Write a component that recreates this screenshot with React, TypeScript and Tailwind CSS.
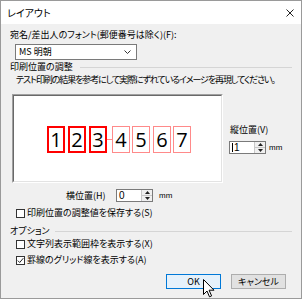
import React from "react";

function Spin({ value, caret }: { value: string; caret?: boolean }) {
  return (
    <div className="w-[37px] h-[13px] bg-white border border-[#7a7a7a] flex items-stretch">
      <div className="flex-1 flex items-center pl-[2px] text-[10px] leading-[10px] font-['Liberation_Sans',sans-serif]">
        {caret && <span className="w-px h-[9px] bg-black mr-[1px]" />}
        {value}
      </div>
      <div className="w-[11px] border-l border-[#c8c8c8] bg-[#f0f0f0] flex flex-col">
        <div className="flex-1 flex items-center justify-center border-b border-[#c8c8c8]">
          <svg width="5" height="3" viewBox="0 0 5 3"><path d="M0 3 L2.5 0 L5 3 Z" fill="#222" /></svg>
        </div>
        <div className="flex-1 flex items-center justify-center">
          <svg width="5" height="3" viewBox="0 0 5 3"><path d="M0 0 L2.5 3 L5 0 Z" fill="#222" /></svg>
        </div>
      </div>
    </div>
  );
}

function Check({ checked }: { checked?: boolean }) {
  return (
    <div className="w-[9px] h-[9px] border border-[#333] bg-white flex items-center justify-center shrink-0">
      {checked && (
        <svg width="7" height="7" viewBox="0 0 7 7">
          <path d="M0.8 3.6 L2.7 5.5 L6.3 1.2" fill="none" stroke="#222" strokeWidth="1" />
        </svg>
      )}
    </div>
  );
}

function Digit({ d, strong }: { d: string; strong?: boolean }) {
  return (
    <div
      className={
        strong
          ? "w-[18px] h-[27px] border-2 border-[#ff0000] flex items-center justify-center text-[20px] leading-[20px] font-['Open_Sans',sans-serif] text-black"
          : "w-[18px] h-[27px] border-[1.5px] border-[#ff8a8a] flex items-center justify-center text-[20px] leading-[20px] font-['Open_Sans',sans-serif] text-black"
      }
    >
      {d}
    </div>
  );
}

export default function App() {
  return (
    <div className="relative w-[302px] h-[299px] border border-[#9a9a9a] bg-[#f0f0f0] flex flex-col overflow-hidden text-[9px] leading-[12px] text-black font-['Noto_Sans_CJK_JP',sans-serif] [font-feature-settings:'palt']">
      <div className="h-[23px] bg-white flex items-center justify-between pl-[6px] pr-[7px] shrink-0">
        <span className="text-[10px]">レイアウト</span>
        <svg width="8" height="8" viewBox="0 0 8 8">
          <path d="M0.5 0.5 L7.5 7.5 M7.5 0.5 L0.5 7.5" stroke="#222" strokeWidth="1" />
        </svg>
      </div>
      <div className="flex flex-col pl-[9px] pr-[9px]">
        <div className="mt-[5px] h-[12px] whitespace-nowrap">宛名/差出人のフォント(郵便番号は除く)(F):</div>
        <div className="mt-[3px] ml-[5px] w-[122px] h-[16px] bg-white border border-[#7a7a7a] flex items-center justify-between pl-[3px] pr-[5px]">
          <span>MS 明朝</span>
          <svg width="7" height="4" viewBox="0 0 7 4">
            <path d="M0.5 0.5 L3.5 3.5 L6.5 0.5" fill="none" stroke="#333" strokeWidth="1" />
          </svg>
        </div>
        <div className="mt-[1px] h-[12px] flex items-center gap-[7px]">
          <span className="whitespace-nowrap">印刷位置の調整</span>
          <div className="flex-1 h-px bg-[#d5d5d5]" />
        </div>
        <div className="mt-[1px] ml-[6px] h-[12px] whitespace-nowrap tracking-[-1.1px]">テスト印刷の結果を参考にして実際にずれているイメージを再現してください。</div>
        <div className="mt-[8px] ml-[2px] flex">
          <div className="w-[211px] h-[89px] border border-t-[#a0a0a0] border-l-[#a0a0a0] border-r-white border-b-white">
            <div className="w-full h-full bg-white border border-t-[#696969] border-l-[#696969] border-r-[#e3e3e3] border-b-[#e3e3e3] pl-[33px] pt-[30px]">
              <div className="flex items-center">
                <Digit d="1" strong />
                <div className="ml-[3px]"><Digit d="2" strong /></div>
                <div className="ml-[3px]"><Digit d="3" strong /></div>
                <div className="w-[5px] h-px bg-[#ff8a8a]" />
                <Digit d="4" />
                <div className="ml-[2px]"><Digit d="5" /></div>
                <div className="ml-[3px]"><Digit d="6" /></div>
                <div className="ml-[2px]"><Digit d="7" /></div>
              </div>
            </div>
          </div>
          <div className="ml-[6px] pt-[30px] flex flex-col">
            <div className="pl-[1px] h-[12px] whitespace-nowrap">縦位置(V)</div>
            <div className="mt-[5px] flex items-center">
              <Spin value="1" caret />
              <span className="ml-[3px] text-[8px] font-['Liberation_Sans',sans-serif]">mm</span>
            </div>
          </div>
        </div>
        <div className="mt-[6px] flex items-center h-[13px]">
          <div className="ml-[56px] w-[50px] whitespace-nowrap">横位置(H)</div>
          <Spin value="0" />
          <span className="ml-[6px] text-[8px] font-['Liberation_Sans',sans-serif]">mm</span>
        </div>
        <div className="mt-[5px] h-[12px] ml-[6px] flex items-center gap-[2px]">
          <Check />
          <span className="whitespace-nowrap">印刷位置の調整値を保存する(S)</span>
        </div>
        <div className="mt-[6px] h-[12px] flex items-center gap-[5px]">
          <span className="whitespace-nowrap">オプション</span>
          <div className="flex-1 h-px bg-[#d5d5d5]" />
        </div>
        <div className="mt-[1px] h-[12px] ml-[6px] flex items-center gap-[2px]">
          <Check />
          <span className="whitespace-nowrap">文字列表示範囲枠を表示する(X)</span>
        </div>
        <div className="mt-[4px] h-[12px] ml-[6px] flex items-center gap-[2px]">
          <Check checked />
          <span className="whitespace-nowrap">罫線のグリッド線を表示する(A)</span>
        </div>
        <div className="mt-[8px] flex justify-end gap-[10px] pr-[6px]">
          <div className="w-[55px] h-[15px] border border-[#0078d7] bg-[#e5f1fb] flex items-center justify-center">OK</div>
          <div className="w-[55px] h-[15px] border border-[#adadad] bg-[#e1e1e1] flex items-center justify-center">キャンセル</div>
        </div>
      </div>
      <svg className="absolute left-[202px] top-[278px]" width="12" height="19" viewBox="0 0 12 19">
        <path d="M0.5 0.5 L0.5 15.5 L4 12 L6.5 17.8 L8.6 16.9 L6.1 11.2 L11 11.2 Z" fill="white" stroke="black" strokeWidth="1" strokeLinejoin="miter" />
      </svg>
    </div>
  );
}
